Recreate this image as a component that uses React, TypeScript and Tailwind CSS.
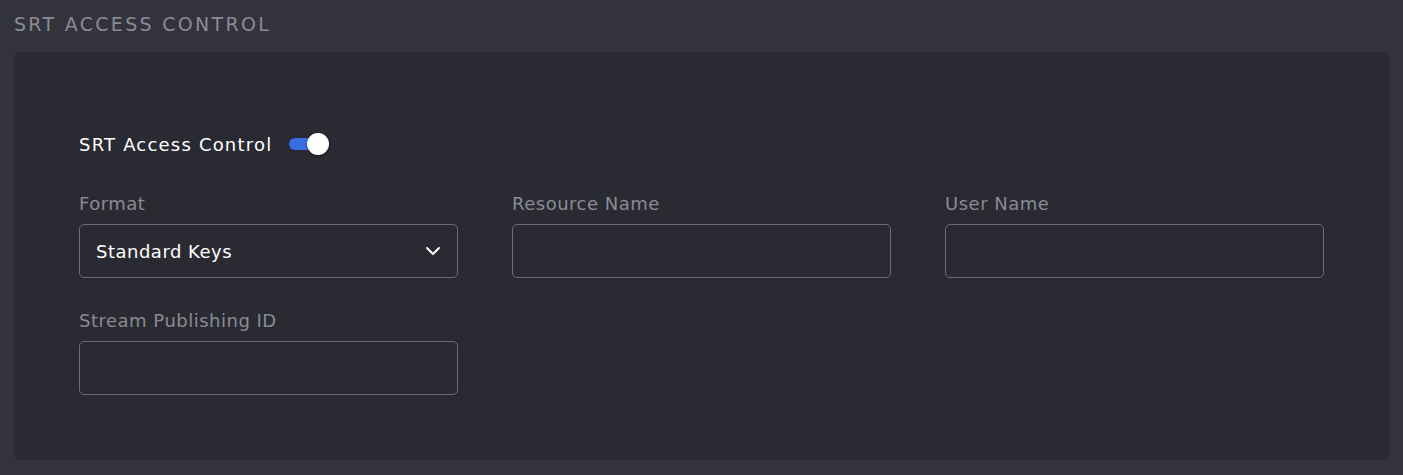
import React from "react";

function Field({ label, children }: { label: string; children?: React.ReactNode }) {
  return (
    <div className="flex flex-col">
      <div className="text-[18px] leading-[24px] tracking-[0.5px] text-[#8b8b94] mb-[8px]">{label}</div>
      <div className="h-[54px] rounded-[5px] border border-[#6c6c78] bg-[#2a2a33] flex items-center px-[16px]">
        {children}
      </div>
    </div>
  );
}

export default function App() {
  return (
    <div
      className="w-[1403px] h-[475px] bg-[#33333d] pt-[11px] px-[14px]"
      style={{ fontFamily: '"DejaVu Sans", "Noto Sans", sans-serif' }}
    >
      <div className="text-[19px] leading-[26px] tracking-[2.3px] text-[#8b8b94]">SRT ACCESS CONTROL</div>
      <div className="mt-[15px] h-[408px] rounded-[5px] bg-[#2a2a33] px-[65px] pt-[78px]">
        <div className="flex items-center h-[28px]">
          <span className="text-[18px] tracking-[1.2px] text-white">SRT Access Control</span>
          <div className="ml-[17px] relative w-[40px] h-[24px] flex items-center">
            <div className="w-[32px] h-[12px] rounded-full bg-[#3a6de0]" />
            <div className="absolute left-[18px] top-[1px] w-[22px] h-[22px] rounded-full bg-white shadow-[0_1px_3px_rgba(0,0,0,0.5)]" />
          </div>
        </div>
        <div className="grid grid-cols-3 gap-x-[54px] gap-y-[31px] mt-[34px]">
          <Field label="Format">
            <span className="text-[18px] tracking-[0.5px] text-white flex-1">Standard Keys</span>
            <svg width="16" height="16" viewBox="0 0 16 16" fill="none">
              <path d="M2 5 L8 11 L14 5" stroke="white" strokeWidth="2" strokeLinecap="round" strokeLinejoin="round" />
            </svg>
          </Field>
          <Field label="Resource Name" />
          <Field label="User Name" />
          <Field label="Stream Publishing ID" />
        </div>
      </div>
    </div>
  );
}
